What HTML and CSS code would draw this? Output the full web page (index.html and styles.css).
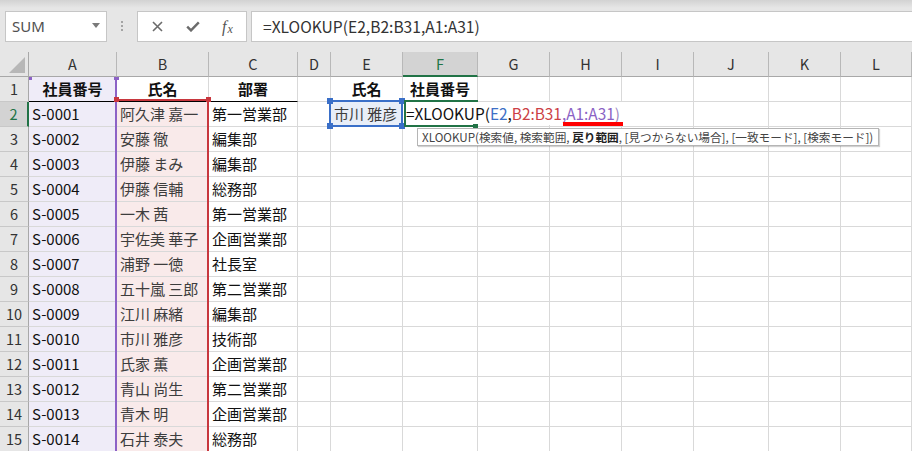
FILE: index.html
```html
<!DOCTYPE html>
<html lang="ja">
<head>
<meta charset="utf-8">
<title>XLOOKUP</title>
<link rel="stylesheet" href="styles.css">
</head>
<body>
<div class="toolbar">
  <div class="namebox"><span class="nb-text">SUM</span><svg class="dd" width="8" height="5" viewBox="0 0 8 5"><polygon points="0,0 8,0 4,5" fill="#7a7a7a"/></svg></div>
  <div class="grip"><i></i><i></i><i></i></div>
  <div class="fxbox">
    <span class="slot"><svg width="11" height="11" viewBox="0 0 11 11"><path d="M1 1L10 10M10 1L1 10" stroke="#6b6b6b" stroke-width="1.6" fill="none"/></svg></span>
    <span class="slot"><svg width="14" height="11" viewBox="0 0 14 11"><path d="M1.2 5.6L5 9.4L12.8 1.4" stroke="#6b6b6b" stroke-width="2.4" fill="none"/></svg></span>
    <span class="slot fx">f<span class="fx-x">x</span></span>
  </div>
  <div class="formula">=XLOOKUP(E2,B2:B31,A1:A31)</div>
</div>

<div class="sheet">
  <div class="grid">
    <div class="corner"><svg width="28" height="24" viewBox="0 0 28 24"><polygon points="25,5 25,21 9,21" fill="#b7b7b7"/></svg></div>
    <div class="ch">A</div><div class="ch">B</div><div class="ch">C</div><div class="ch">D</div><div class="ch">E</div><div class="ch act">F</div><div class="ch">G</div><div class="ch">H</div><div class="ch">I</div><div class="ch">J</div><div class="ch">K</div><div class="ch">L</div>

    <div class="rh">1</div><div class="c a hd u">社員番号</div><div class="c hd u">氏名</div><div class="c hd u">部署</div><div class="c"></div><div class="c hd">氏名</div><div class="c hd">社員番号</div><div class="c"></div><div class="c"></div><div class="c"></div><div class="c"></div><div class="c"></div><div class="c"></div>

    <div class="rh act">2</div><div class="c a">S-0001</div><div class="c b">阿久津 嘉一</div><div class="c">第一営業部</div><div class="c"></div><div class="c e">市川 雅彦</div><div class="c"></div><div class="c"></div><div class="c"></div><div class="c"></div><div class="c"></div><div class="c"></div><div class="c"></div>

    <div class="rh">3</div><div class="c a">S-0002</div><div class="c b">安藤 徹</div><div class="c">編集部</div><div class="c"></div><div class="c"></div><div class="c"></div><div class="c"></div><div class="c"></div><div class="c"></div><div class="c"></div><div class="c"></div><div class="c"></div>

    <div class="rh">4</div><div class="c a">S-0003</div><div class="c b">伊藤 まみ</div><div class="c">編集部</div><div class="c"></div><div class="c"></div><div class="c"></div><div class="c"></div><div class="c"></div><div class="c"></div><div class="c"></div><div class="c"></div><div class="c"></div>

    <div class="rh">5</div><div class="c a">S-0004</div><div class="c b">伊藤 信輔</div><div class="c">総務部</div><div class="c"></div><div class="c"></div><div class="c"></div><div class="c"></div><div class="c"></div><div class="c"></div><div class="c"></div><div class="c"></div><div class="c"></div>

    <div class="rh">6</div><div class="c a">S-0005</div><div class="c b">一木 茜</div><div class="c">第一営業部</div><div class="c"></div><div class="c"></div><div class="c"></div><div class="c"></div><div class="c"></div><div class="c"></div><div class="c"></div><div class="c"></div><div class="c"></div>

    <div class="rh">7</div><div class="c a">S-0006</div><div class="c b">宇佐美 華子</div><div class="c">企画営業部</div><div class="c"></div><div class="c"></div><div class="c"></div><div class="c"></div><div class="c"></div><div class="c"></div><div class="c"></div><div class="c"></div><div class="c"></div>

    <div class="rh">8</div><div class="c a">S-0007</div><div class="c b">浦野 一徳</div><div class="c">社長室</div><div class="c"></div><div class="c"></div><div class="c"></div><div class="c"></div><div class="c"></div><div class="c"></div><div class="c"></div><div class="c"></div><div class="c"></div>

    <div class="rh">9</div><div class="c a">S-0008</div><div class="c b">五十嵐 三郎</div><div class="c">第二営業部</div><div class="c"></div><div class="c"></div><div class="c"></div><div class="c"></div><div class="c"></div><div class="c"></div><div class="c"></div><div class="c"></div><div class="c"></div>

    <div class="rh">10</div><div class="c a">S-0009</div><div class="c b">江川 麻緒</div><div class="c">編集部</div><div class="c"></div><div class="c"></div><div class="c"></div><div class="c"></div><div class="c"></div><div class="c"></div><div class="c"></div><div class="c"></div><div class="c"></div>

    <div class="rh">11</div><div class="c a">S-0010</div><div class="c b">市川 雅彦</div><div class="c">技術部</div><div class="c"></div><div class="c"></div><div class="c"></div><div class="c"></div><div class="c"></div><div class="c"></div><div class="c"></div><div class="c"></div><div class="c"></div>

    <div class="rh">12</div><div class="c a">S-0011</div><div class="c b">氏家 薫</div><div class="c">企画営業部</div><div class="c"></div><div class="c"></div><div class="c"></div><div class="c"></div><div class="c"></div><div class="c"></div><div class="c"></div><div class="c"></div><div class="c"></div>

    <div class="rh">13</div><div class="c a">S-0012</div><div class="c b">青山 尚生</div><div class="c">第二営業部</div><div class="c"></div><div class="c"></div><div class="c"></div><div class="c"></div><div class="c"></div><div class="c"></div><div class="c"></div><div class="c"></div><div class="c"></div>

    <div class="rh">14</div><div class="c a">S-0013</div><div class="c b">青木 明</div><div class="c">企画営業部</div><div class="c"></div><div class="c"></div><div class="c"></div><div class="c"></div><div class="c"></div><div class="c"></div><div class="c"></div><div class="c"></div><div class="c"></div>

    <div class="rh">15</div><div class="c a">S-0014</div><div class="c b">石井 泰夫</div><div class="c">総務部</div><div class="c"></div><div class="c"></div><div class="c"></div><div class="c"></div><div class="c"></div><div class="c"></div><div class="c"></div><div class="c"></div><div class="c"></div>
  </div>

  <!-- range highlight for A1:A31 (purple) -->
  <div class="ov purple-line"></div>
  <div class="ov purple-sq sq-a1l"></div>
  <div class="ov purple-sq sq-a1r"></div>
  <!-- range highlight for B2:B31 (red) -->
  <div class="ov red-top"></div>
  <div class="ov red-right"></div>
  <div class="ov red-sq sq-b2l"></div>
  <div class="ov red-sq sq-b2r"></div>
  <!-- range highlight for E2 (blue) -->
  <div class="ov blue-box"></div>
  <div class="ov blue-sq sq-tl"></div>
  <div class="ov blue-sq sq-tr"></div>
  <div class="ov blue-sq sq-bl"></div>
  <div class="ov blue-sq sq-br"></div>
  <!-- active cell F2 in edit mode -->
  <div class="ov edit">=XLOOKUP(<span class="rE">E2</span>,<span class="rB">B2:B31</span><span class="rA">,A1:A31</span><span class="rP">)</span></div>
  <div class="ov green-top"></div>
  <div class="ov green-left"></div>
  <div class="ov green-bottom"></div>
  <div class="ov green-handle"></div>
  <div class="ov squiggle"></div>
  <div class="ov tip">XLOOKUP(検索値, 検索範囲, <b>戻り範囲</b>, [見つからない場合], [一致モード], [検索モード])</div>
</div>
</body>
</html>
```

FILE: styles.css
```css
html, body {
  margin: 0;
  padding: 0;
}
body {
  width: 912px;
  height: 451px;
  overflow: hidden;
  background: #ffffff;
  font-family: "Noto Sans CJK JP", "Noto Sans", sans-serif;
  color: #111;
}

/* ---------- formula bar ---------- */
.toolbar {
  height: 52px;
  box-sizing: border-box;
  padding-top: 11px;
  display: flex;
  align-items: flex-start;
  background: linear-gradient(#d2d2d2 0px, #e6e6e6 8px, #e6e6e6 100%);
}
.namebox {
  margin-left: 5px;
  width: 102px;
  height: 31px;
  box-sizing: border-box;
  border: 1px solid #c6c6c6;
  background: #fff;
  display: flex;
  align-items: center;
  justify-content: space-between;
  padding: 0 6px 0 6px;
}
.nb-text {
  font-family: "Noto Sans", sans-serif;
  font-size: 15px;
  color: #505050;
  line-height: 29px;
}
.dd {
  display: block;
  margin-top: -2px;
}
.grip {
  margin-left: 14px;
  width: 2px;
  padding-top: 10px;
  display: flex;
  flex-direction: column;
  gap: 2px;
}
.grip i {
  display: block;
  width: 2px;
  height: 2px;
  background: #a4a4a4;
}
.fxbox {
  margin-left: 14px;
  width: 110px;
  height: 31px;
  box-sizing: border-box;
  border: 1px solid #c6c6c6;
  background: #fff;
  display: flex;
  align-items: center;
  padding-left: 2px;
}
.slot {
  width: 35px;
  height: 29px;
  display: flex;
  align-items: center;
  justify-content: center;
}
.fx {
  font-family: "Liberation Serif", serif;
  font-style: italic;
  font-size: 16px;
  color: #555;
  line-height: 1;
}
.fx-x {
  font-size: 12px;
  position: relative;
  top: 2px;
  margin-left: 1px;
}
.formula {
  margin-left: 4px;
  flex: 1;
  height: 31px;
  box-sizing: border-box;
  border: 1px solid #c6c6c6;
  border-right: none;
  background: #fff;
  padding-left: 11px;
  font-size: 15.6px;
  line-height: 28px;
  color: #333;
  white-space: nowrap;
}

/* ---------- sheet grid ---------- */
.sheet {
  position: relative;
  height: 399px;
  overflow: hidden;
}
.grid {
  display: grid;
  grid-template-columns: 29px 88px 92px 89px 33px 72px 75px 72px 72px 72px 75px 72px 71px;
  grid-auto-rows: 25px;
}
.corner {
  background: #e6e6e6;
  border-right: 1px solid #a8a8a8;
  border-bottom: 1px solid #a8a8a8;
  box-sizing: border-box;
}
.corner svg { display: block; }
.ch {
  background: #e6e6e6;
  border-right: 1px solid #b8b8b8;
  border-bottom: 1px solid #a8a8a8;
  box-sizing: border-box;
  text-align: center;
  font-size: 14.5px;
  line-height: 24px;
  color: #333;
}
.ch.act {
  background: #d3d3d3;
  color: #217346;
  border-bottom: 2px solid #217346;
  line-height: 23px;
}
.rh {
  background: #e6e6e6;
  border-right: 1px solid #a8a8a8;
  border-bottom: 1px solid #c8c8c8;
  box-sizing: border-box;
  text-align: center;
  font-size: 14.5px;
  line-height: 24px;
  color: #333;
}
.rh.act {
  background: #d3d3d3;
  color: #217346;
  border-right: 2px solid #217346;
}
.c {
  border-right: 1px solid #d9d9d9;
  border-bottom: 1px solid #d9d9d9;
  box-sizing: border-box;
  font-size: 15px;
  line-height: 24px;
  padding-left: 3px;
  white-space: nowrap;
  overflow: hidden;
  color: #111;
}
.hd {
  font-weight: bold;
  text-align: center;
  padding-left: 0;
}
.u { border-bottom-color: #000; }
.a { background: #efecf8; }
.b { background: #f9eaea; color: #3d3d3d; }
.e { background: #e8eef8; color: #3d3d3d; }

/* ---------- overlays (range highlights, edit box, tooltip) ---------- */
.ov { position: absolute; }

.purple-line { left: 115px; top: 25px; width: 2px; height: 380px; background: #8c62c6; }
.purple-sq { background: #8c62c6; }
.sq-a1l { left: 29px; top: 25px; width: 3px; height: 3px; }
.sq-a1r { left: 114px; top: 25px; width: 5px; height: 3px; }

.red-top { left: 117px; top: 47px; width: 92px; height: 2px; background: #c8373e; }
.red-right { left: 207px; top: 47px; width: 2px; height: 360px; background: #c8373e; }
.red-sq { width: 5px; height: 5px; background: #c8373e; }
.sq-b2l { left: 114px; top: 45px; }
.sq-b2r { left: 206px; top: 45px; }

.blue-box { left: 329px; top: 48px; width: 74px; height: 27px; box-sizing: border-box; border: 2px solid #3a6fc8; }
.blue-sq { width: 6px; height: 6px; background: #3a6fc8; }
.sq-tl { left: 327px; top: 46px; }
.sq-tr { left: 399px; top: 46px; }
.sq-bl { left: 327px; top: 71px; }
.sq-br { left: 399px; top: 71px; }

.edit {
  left: 406px;
  top: 50px;
  width: 217px;
  height: 23px;
  background: #fff;
  font-size: 15.4px;
  line-height: 23px;
  color: #111;
  white-space: nowrap;
}
.rE { color: #3d6fc6; }
.rB { color: #cc3f45; }
.rA { color: #8a62c4; }
.rP { color: #9a86be; }

.green-top { left: 404px; top: 48px; width: 74px; height: 2px; background: #217346; }
.green-left { left: 404px; top: 48px; width: 2px; height: 27px; background: #217346; }
.green-bottom { left: 404px; top: 73px; width: 72px; height: 2px; background: #217346; }
.green-handle { left: 473px; top: 72px; width: 5px; height: 4px; background: #217346; }

.squiggle { left: 563px; top: 70px; width: 60px; height: 4px; background: #ff0000; }

.tip {
  left: 417px;
  top: 76px;
  width: 462px;
  height: 18px;
  box-sizing: border-box;
  border: 1px solid #b5b5b5;
  background: #fff;
  box-shadow: 1px 1px 1px rgba(0, 0, 0, 0.18);
  padding-left: 4px;
  font-size: 11.65px;
  line-height: 16px;
  color: #444;
  white-space: nowrap;
}
.tip b { color: #222; }
```
